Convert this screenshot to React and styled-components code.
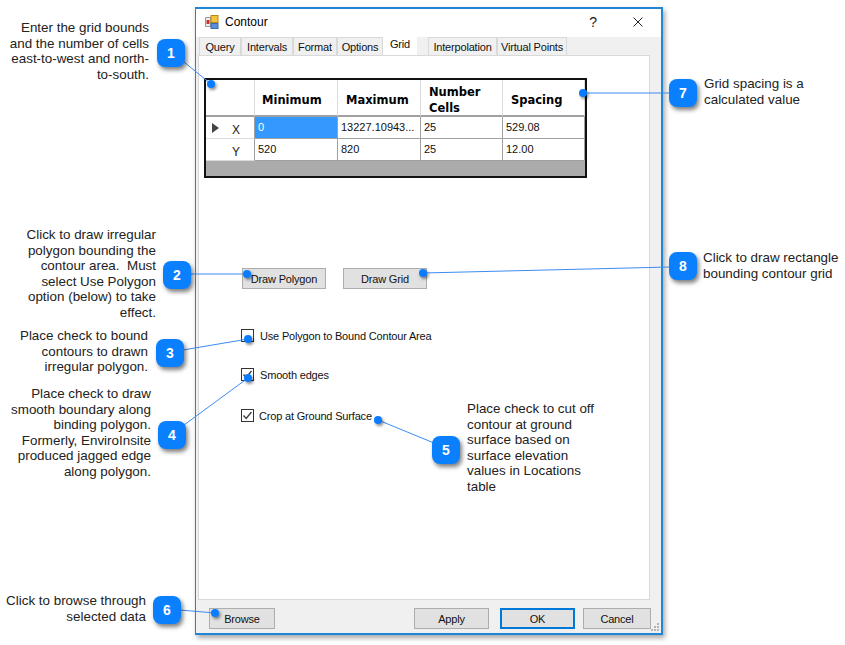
import React from 'react';
import styled, { createGlobalStyle } from 'styled-components';

const GlobalStyle = createGlobalStyle`
  html, body { margin: 0; padding: 0; background: #fff; }
  body { font-family: "Liberation Sans", Arial, sans-serif; }
`

const Canvas = styled.div`
  position: relative;
  width: 845px;
  height: 645px;
  overflow: hidden;
  background: #fff;
`

// the dialog
const Dialog = styled.div`
  position: absolute;
  left: 195px;
  top: 7px;
  width: 468px;
  height: 628px;
  box-sizing: border-box;
  border: 1px solid #1f86d8;
  border-width: 2px 2px 2px 1px;
  background: #f0f0f0;
  box-shadow: 2px 3px 5px rgba(0, 0, 0, .35);
  display: flex;
  flex-direction: column;
  font-family: "Liberation Sans", Arial, sans-serif;
  font-size: 11px;
  letter-spacing: -.18px;
  color: #111;
`

const TitleBar = styled.div`
  height: 28px;
  flex: none;
  box-sizing: border-box;
  padding: 0 18px 3px 9px;
  background: #fff;
  display: flex;
  align-items: center;
  gap: 6px;
  font-size: 12px;
  letter-spacing: 0;
  color: #000;
`

const TitleText = styled.span`
  flex: 1;
`

const HelpMark = styled.span`
  font-size: 14px;
  margin-right: 30px;
  color: #222;
`

const TabStrip = styled.div`
  height: 18px;
  flex: none;
  display: flex;
  padding-left: 3px;
`

const Tab = styled.div`
  box-sizing: border-box;
  width: ${p => p.$width}px;
  height: ${p => p.$active ? 20 : 18}px;
  margin-top: ${p => p.$active ? -2 : 0}px;
  margin-right: ${p => p.$gap || 0}px;
  padding-top: 3px;
  text-align: center;
  background: ${p => p.$active ? '#fff' : '#f0f0f0'};
  border: solid #d9d9d9;
  border-width: ${p => p.$active ? '0' : '1px 1px 0 1px'};
  white-space: nowrap;
  position: relative;
  z-index: ${p => p.$active ? 1 : 0};
`

const Panel = styled.div`
  flex: none;
  width: 452px;
  height: 545px;
  margin-left: 2px;
  box-sizing: border-box;
  background: #fff;
  border: 1px solid #d9d9d9;
  padding: 22px 0 0 5px;
`

const GridTable = styled.div`
  box-sizing: border-box;
  width: 383px;
  height: 100px;
  border: 2px solid #111;
  background: #ababab;
  display: grid;
  grid-template-columns: 49px 83px 83px 82px 82px;
  grid-template-rows: 37px 22px 22px;
`

const HeadCell = styled.div`
  box-sizing: border-box;
  background: #fff;
  border-right: 1px solid #dcdcdc;
  border-bottom: 2px solid #a0a0a0;
  padding: 5px 0 0 ${p => p.$pad}px;
  display: flex;
  align-items: center;
  font-family: "DejaVu Sans", sans-serif;
  font-weight: 700;
  font-size: 11.5px;
  line-height: 16px;
  letter-spacing: 0;
  color: #000;
`

const RowHead = styled.div`
  box-sizing: border-box;
  background: #fff;
  border-bottom: 1px solid #dcdcdc;
  border-right: 1px solid #a0a0a0;
  display: flex;
  align-items: center;
  padding-left: 6px;
  font-size: 12px;
  color: #222;
`

const RowLabel = styled.span`
  margin-left: ${p => p.$marker ? 13 : 20}px;
  margin-top: 5px;
`

const Cell = styled.div`
  box-sizing: border-box;
  background: ${p => p.$selected ? '#3399ff' : '#fff'};
  color: ${p => p.$selected ? '#fff' : '#111'};
  border-right: 1px solid #a0a0a0;
  border-bottom: 1px solid #a0a0a0;
  padding: 4px 0 0 3px;
  letter-spacing: 0;
  white-space: nowrap;
`

const ButtonRow = styled.div`
  display: flex;
  gap: 17px;
  margin: 90px 0 0 38px;
`

const WinButton = styled.div`
  box-sizing: border-box;
  width: ${p => p.$width}px;
  height: 21px;
  margin-left: ${p => p.$offset || 0}px;
  display: flex;
  align-items: center;
  justify-content: center;
  background: #e1e1e1;
  border: ${p => p.$primary ? '2px solid #0078d7' : '1px solid #adadad'};
  white-space: nowrap;
`

const CheckRow = styled.label`
  display: flex;
  align-items: center;
  gap: ${p => p.$gap}px;
  height: 14px;
  margin: ${p => p.$top}px 0 0 37px;
  white-space: nowrap;
`

const CheckLabel = styled.span`
  padding-top: 2px;
`

const CheckBox = styled.span`
  box-sizing: border-box;
  width: 13px;
  height: 13px;
  flex: none;
  background: #fff;
  border: 1px solid #333;
  display: flex;
  align-items: center;
  justify-content: center;
`

const BottomBar = styled.div`
  flex: 1;
  display: flex;
  align-items: flex-start;
  padding: 8px 0 0 13px;
  position: relative;
`

const ActionGroup = styled.div`
  margin-left: auto;
  margin-right: 10px;
  display: flex;
`

const SizeGrip = styled.svg`
  position: absolute;
  right: 1px;
  bottom: 1px;
`

// annotations sitting on top of the screenshot
const Note = styled.div`
  position: absolute;
  top: ${p => p.$top}px;
  ${p => p.$right != null ? `right: ${845 - p.$right}px; text-align: right;` : `left: ${p.$left}px;`}
  font-size: 13.4px;
  line-height: 15.5px;
  color: #222;
  white-space: pre;
`

const Badge = styled.div`
  position: absolute;
  left: ${p => p.$x}px;
  top: ${p => p.$y}px;
  width: 28px;
  height: 28px;
  border-radius: 8px;
  background: #0a80ff;
  box-shadow: 2px 3px 4px rgba(0, 0, 0, .5);
  color: #fff;
  font-weight: 700;
  font-size: 14px;
  display: flex;
  align-items: center;
  justify-content: center;
`

const Overlay = styled.svg`
  position: absolute;
  left: 0;
  top: 0;
  pointer-events: none;
`

const Dot = styled.div`
  position: absolute;
  left: ${p => p.$x - 4}px;
  top: ${p => p.$y - 4}px;
  width: 8px;
  height: 8px;
  border-radius: 50%;
  background: #0a7cff;
  box-shadow: 1.5px 2px 3px rgba(0, 0, 0, .45);
`

const callouts = [
  { n: 1, x: 157, y: 39, from: [184, 62], dot: [211, 84] },
  { n: 2, x: 163, y: 261, from: [190, 274], dot: [247, 274] },
  { n: 3, x: 156, y: 339, from: [183, 350], dot: [248, 339] },
  { n: 4, x: 158, y: 421, from: [184, 425], dot: [248, 378] },
  { n: 5, x: 432, y: 436, from: [434, 443], dot: [378, 420] },
  { n: 6, x: 153, y: 596, from: [180, 610], dot: [215, 613] },
  { n: 7, x: 669, y: 79, from: [670, 93], dot: [583, 93] },
  { n: 8, x: 669, y: 252, from: [670, 267], dot: [423, 273] },
];

const notes = [
  { right: 149, top: 20, text: 'Enter the grid bounds\nand the number of cells\neast-to-west and north-\nto-south.' },
  { right: 156, top: 227, text: 'Click to draw irregular\npolygon bounding the\ncontour area.  Must\nselect Use Polygon\noption (below) to take\neffect.' },
  { right: 148, top: 328, text: 'Place check to bound\ncontours to drawn\nirregular polygon.' },
  { right: 151, top: 386, text: 'Place check to draw\nsmooth boundary along\nbinding polygon.\nFormerly, EnviroInsite\nproduced jagged edge\nalong polygon.' },
  { left: 467, top: 401, text: 'Place check to cut off\ncontour at ground\nsurface based on\nsurface elevation\nvalues in Locations\ntable' },
  { right: 146, top: 593, text: 'Click to browse through\nselected data' },
  { left: 704, top: 76, text: 'Grid spacing is a\ncalculated value' },
  { left: 703, top: 250, text: 'Click to draw rectangle\nbounding contour grid' },
];

const tabs = [
  { label: 'Query', width: 42 },
  { label: 'Intervals', width: 52 },
  { label: 'Format', width: 44 },
  { label: 'Options', width: 46 },
  { label: 'Grid', width: 34, active: true, gap: 11 },
  { label: 'Interpolation', width: 69 },
  { label: 'Virtual Points', width: 70 },
];

const AppIcon = () => (
  <svg width="14" height="14" viewBox="0 0 14 14">
    <rect x="0.5" y="2.5" width="5" height="9" fill="#eee" stroke="#999" />
    <rect x="1.5" y="5" width="3" height="4" fill="#c8322a" />
    <rect x="6" y="0.5" width="7" height="7" fill="#f5c43c" stroke="#b98a1a" />
    <rect x="6" y="8.5" width="7" height="5" fill="#5d8fd8" stroke="#3f6cb0" />
  </svg>
);

const CloseIcon = () => (
  <svg width="10" height="10" viewBox="0 0 10 10">
    <path d="M0.5 0.5 L9.5 9.5 M9.5 0.5 L0.5 9.5" stroke="#222" strokeWidth="1" fill="none" />
  </svg>
);

const Tick = () => (
  <svg width="11" height="11" viewBox="0 0 11 11">
    <path d="M1.5 5.5 L4.2 8.5 L9.5 2" stroke="#444" strokeWidth="1.4" fill="none" />
  </svg>
);

const RowMarker = () => (
  <svg width="7" height="10" viewBox="0 0 7 10">
    <path d="M0 0 L7 5 L0 10 Z" fill="#444" />
  </svg>
);

const App = () => (
  <Canvas>
    <GlobalStyle />
    <Dialog>
      <TitleBar>
        <AppIcon />
        <TitleText>Contour</TitleText>
        <HelpMark>?</HelpMark>
        <CloseIcon />
      </TitleBar>
      <TabStrip>
        {tabs.map(t => (
          <Tab key={t.label} $width={t.width} $active={t.active} $gap={t.gap}>{t.label}</Tab>
        ))}
      </TabStrip>
      <Panel>
        <GridTable>
          <HeadCell $pad={0} />
          <HeadCell $pad={7}>Minimum</HeadCell>
          <HeadCell $pad={8}>Maximum</HeadCell>
          <HeadCell $pad={8}>Number<br />Cells</HeadCell>
          <HeadCell $pad={8}>Spacing</HeadCell>

          <RowHead><RowMarker /><RowLabel $marker>X</RowLabel></RowHead>
          <Cell $selected>0</Cell>
          <Cell>13227.10943...</Cell>
          <Cell>25</Cell>
          <Cell>529.08</Cell>

          <RowHead><RowLabel>Y</RowLabel></RowHead>
          <Cell>520</Cell>
          <Cell>820</Cell>
          <Cell>25</Cell>
          <Cell>12.00</Cell>
        </GridTable>
        <ButtonRow>
          <WinButton $width={84}>Draw Polygon</WinButton>
          <WinButton $width={84}>Draw Grid</WinButton>
        </ButtonRow>
        <CheckRow $top={39} $gap={6}><CheckBox /><CheckLabel>Use Polygon to Bound Contour Area</CheckLabel></CheckRow>
        <CheckRow $top={25} $gap={6}><CheckBox><Tick /></CheckBox><CheckLabel>Smooth edges</CheckLabel></CheckRow>
        <CheckRow $top={27} $gap={5}><CheckBox><Tick /></CheckBox><CheckLabel>Crop at Ground Surface</CheckLabel></CheckRow>
      </Panel>
      <BottomBar>
        <WinButton $width={66}>Browse</WinButton>
        <ActionGroup>
          <WinButton $width={75}>Apply</WinButton>
          <WinButton $width={75} $primary $offset={11}>OK</WinButton>
          <WinButton $width={68} $offset={8}>Cancel</WinButton>
        </ActionGroup>
        <SizeGrip width="11" height="11" viewBox="0 0 11 11">
          <path d="M8 2h2v2H8zM5 5h2v2H5zM8 5h2v2H8zM2 8h2v2H2zM5 8h2v2H5zM8 8h2v2H8z" fill="#b4b4b4" />
        </SizeGrip>
      </BottomBar>
    </Dialog>

    {notes.map(n => (
      <Note key={n.top} $right={n.right} $left={n.left} $top={n.top}>{n.text}</Note>
    ))}

    <Overlay width="845" height="645">
      {callouts.map(c => (
        <line key={c.n} x1={c.from[0]} y1={c.from[1]} x2={c.dot[0]} y2={c.dot[1]} stroke="#3d8bf5" strokeWidth="1" />
      ))}
    </Overlay>
    {callouts.map(c => <Dot key={c.n} $x={c.dot[0]} $y={c.dot[1]} />)}
    {callouts.map(c => <Badge key={c.n} $x={c.x} $y={c.y}>{c.n}</Badge>)}
  </Canvas>
);

export default App;
